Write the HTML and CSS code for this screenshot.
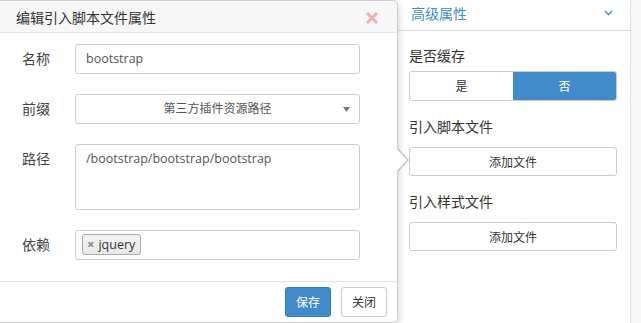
FILE: index.html
```html
<!DOCTYPE html>
<html lang="zh-CN">
    <head>
        <meta charset="UTF-8" />
        <meta name="viewport" content="width=device-width, initial-scale=1.0" />
        <title>编辑引入脚本文件属性</title>
        <link rel="stylesheet" href="styles.css">
    </head>
    <body>
        <div class="layout">
            <div class="canvas"></div>

            <!-- 右侧属性面板 -->
            <aside class="sidebar">
                <div class="side-head">
                    <span>高级属性</span>
                    <svg class="chevron" width="9" height="6" viewBox="0 0 9 6"><polyline points="1,1 4.5,4.5 8,1" fill="none" stroke="#428bca" stroke-width="1.4"/></svg>
                </div>
                <div class="side-body">
                    <div class="group first">
                        <div class="group-label">是否缓存</div>
                        <div class="toggle">
                            <span class="opt">是</span>
                            <span class="opt on">否</span>
                        </div>
                    </div>
                    <div class="group">
                        <div class="group-label">引入脚本文件</div>
                        <button class="btn-add">添加文件</button>
                    </div>
                    <div class="group">
                        <div class="group-label">引入样式文件</div>
                        <button class="btn-add">添加文件</button>
                    </div>
                </div>
            </aside>
            <div class="strip"></div>
        </div>

        <!-- 弹出框 -->
        <div class="popover">
            <div class="pop-title">
                <span>编辑引入脚本文件属性</span>
                <svg class="close" width="12" height="12" viewBox="0 0 12 12"><path d="M2 2 L10 10 M10 2 L2 10" stroke="#efb0b0" stroke-width="3" stroke-linecap="square"/></svg>
            </div>
            <div class="pop-body">
                <div class="row">
                    <label>名称</label>
                    <div class="input">bootstrap</div>
                </div>
                <div class="row">
                    <label>前缀</label>
                    <div class="input select">
                        <span>第三方插件资源路径</span>
                        <svg class="caret" width="7" height="5" viewBox="0 0 7 5"><polygon points="0,0 7,0 3.5,5" fill="#777"/></svg>
                    </div>
                </div>
                <div class="row">
                    <label>路径</label>
                    <div class="input area">/bootstrap/bootstrap/bootstrap</div>
                </div>
                <div class="row">
                    <label>依赖</label>
                    <div class="input tags">
                        <span class="tag"><b>×</b>jquery</span>
                    </div>
                </div>
            </div>
            <div class="pop-foot">
                <button class="btn primary">保存</button>
                <button class="btn">关闭</button>
            </div>
        </div>
    </body>
</html>
```

FILE: styles.css
```css
* {
    margin: 0;
    padding: 0;
    box-sizing: border-box;
}
body {
    font-family: "Open Sans", "Noto Sans CJK SC", sans-serif;
    background-color: #fff;
    color: #333;
    font-size: 14px;
    position: relative;
    overflow: hidden;
}
.layout {
    display: flex;
    height: 323px;
}
.canvas {
    flex: 1;
}
.sidebar {
    width: 234px;
    border-right: 1px solid #ddd;
}
.strip {
    width: 10px;
    background-color: #f8f8f8;
}
.side-head {
    height: 31px;
    border-bottom: 1px solid #ddd;
    display: flex;
    align-items: center;
    justify-content: space-between;
    padding: 0 17px 2px 14px;
    color: #428bca;
    line-height: 20px;
}
.chevron {
    margin-top: -2px;
}
.side-body {
    padding: 0 13px 0 12px;
}
.group {
    margin-top: 16px;
}
.group.first {
    margin-top: 15px;
}
.group-label {
    line-height: 20px;
    color: #333;
    margin-bottom: 10px;
}
.group.first .group-label {
    margin-bottom: 5px;
}
.toggle {
    display: flex;
    height: 30px;
    border: 1px solid #ccc;
    border-radius: 3px;
    overflow: hidden;
}
.opt {
    flex: 1;
    display: flex;
    align-items: center;
    justify-content: center;
    font-size: 12px;
    color: #333;
}
.opt.on {
    background-color: #428bca;
    color: #fff;
}
.btn-add {
    display: block;
    width: 100%;
    height: 29px;
    border: 1px solid #ccc;
    border-radius: 3px;
    background-color: #fff;
    font-family: inherit;
    font-size: 12px;
    color: #333;
}

/* popover */
.popover {
    position: absolute;
    top: 0;
    left: -10px;
    width: 408px;
    background-color: #fff;
    border: 1px solid rgba(0, 0, 0, 0.2);
    border-radius: 5px;
    box-shadow: 0 3px 8px rgba(0, 0, 0, 0.2);
}
.popover::before,
.popover::after {
    content: "";
    position: absolute;
    border-style: solid;
    border-color: transparent;
}
.popover::before {
    top: 147px;
    right: -12px;
    border-width: 12px 0 12px 11px;
    border-left-color: rgba(0, 0, 0, 0.22);
}
.popover::after {
    top: 148px;
    right: -10px;
    border-width: 11px 0 11px 10px;
    border-left-color: #fff;
}
.pop-title {
    height: 32px;
    background-color: #f7f7f7;
    border-bottom: 1px solid #e5e5e5;
    border-radius: 5px 5px 0 0;
    display: flex;
    align-items: center;
    justify-content: space-between;
    padding: 0 19px 0 25px;
    color: #333;
}
.close {
    margin-top: 2px;
}
.pop-body {
    padding: 11px 0 21px 31px;
}
.row {
    display: flex;
    align-items: flex-start;
    margin-bottom: 20px;
}
.row:last-child {
    margin-bottom: 0;
}
.row label {
    width: 53px;
    line-height: 30px;
    color: #444;
}
.input {
    width: 285px;
    height: 30px;
    border: 1px solid #ccc;
    border-radius: 3px;
    padding: 0 10px;
    font-size: 12.5px;
    color: #555;
    line-height: 28px;
}
.select {
    position: relative;
    text-align: center;
    font-size: 12px;
}
.caret {
    position: absolute;
    right: 9px;
    top: 12px;
}
.area {
    height: 66px;
    line-height: 20px;
    padding-top: 4px;
}
.tags {
    padding: 3px 6px;
    line-height: 19px;
}
.tag {
    display: inline-block;
    height: 21px;
    border: 1px solid #aaa;
    border-radius: 3px;
    background: linear-gradient(#f4f4f4, #e8e8e8);
    padding: 0 5px 0 4px;
    color: #333;
    font-size: 12.5px;
}
.tag b {
    color: #888;
    font-size: 13px;
    margin-right: 4px;
}
.pop-foot {
    border-top: 1px solid #e5e5e5;
    padding: 5px 10px 5px 0;
    display: flex;
    justify-content: flex-end;
    gap: 10px;
}
.btn {
    width: 46px;
    height: 30px;
    border: 1px solid #ccc;
    border-radius: 3px;
    background-color: #fff;
    font-family: inherit;
    font-size: 12px;
    color: #333;
}
.btn.primary {
    background-color: #428bca;
    border-color: #357ebd;
    color: #fff;
}
```
